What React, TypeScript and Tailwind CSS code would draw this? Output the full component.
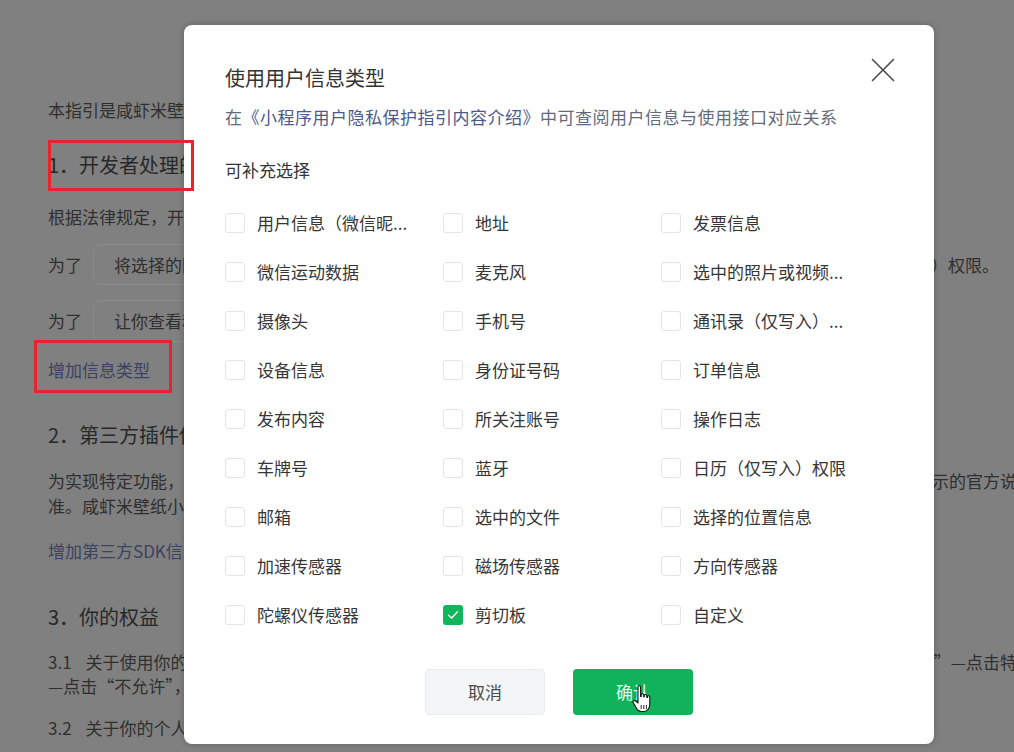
import React from "react";

const items: { label: string; checked?: boolean }[] = [
  { label: "用户信息（微信昵..." },
  { label: "地址" },
  { label: "发票信息" },
  { label: "微信运动数据" },
  { label: "麦克风" },
  { label: "选中的照片或视频..." },
  { label: "摄像头" },
  { label: "手机号" },
  { label: "通讯录（仅写入）..." },
  { label: "设备信息" },
  { label: "身份证号码" },
  { label: "订单信息" },
  { label: "发布内容" },
  { label: "所关注账号" },
  { label: "操作日志" },
  { label: "车牌号" },
  { label: "蓝牙" },
  { label: "日历（仅写入）权限" },
  { label: "邮箱" },
  { label: "选中的文件" },
  { label: "选择的位置信息" },
  { label: "加速传感器" },
  { label: "磁场传感器" },
  { label: "方向传感器" },
  { label: "陀螺仪传感器" },
  { label: "剪切板", checked: true },
  { label: "自定义" },
];

function Checkbox({ checked }: { checked?: boolean }) {
  if (checked) {
    return (
      <span className="flex h-[20px] w-[20px] shrink-0 items-center justify-center rounded-[3px] bg-[#11b65c]">
        <svg width="12" height="10" viewBox="0 0 12 10" fill="none">
          <path d="M1.5 5.2 L4.6 8 L10.5 1.8" stroke="#ffffff" strokeWidth="1.4" strokeLinecap="round" strokeLinejoin="round" />
        </svg>
      </span>
    );
  }
  return <span className="h-[20px] w-[20px] shrink-0 rounded-[3px] border border-[#e4e4e4] bg-white" />;
}

function HandCursor() {
  return (
    <svg width="24" height="30" viewBox="0 0 24 30" className="absolute left-[57px] top-[15px]">
      <path
        d="M8 3c0-1.6 2.6-1.6 2.6 0v9.5h.6V10.8c0-1.5 2.5-1.5 2.5 0v2h.6v-1.2c0-1.5 2.5-1.5 2.5 0v1.8h.6v-.6c0-1.5 2.4-1.5 2.4 0V20c0 4-2.4 7.5-6 7.5h-2.6c-2.2 0-3.6-1.2-4.6-3L3.2 18.6c-.8-1.3.6-2.7 2-1.8L8 19V3z"
        fill="#ffffff"
        stroke="#111111"
        strokeWidth="1.1"
        strokeLinejoin="round"
      />
      <path d="M11.2 21v4M13.8 21v4M16.4 21v4" stroke="#111111" strokeWidth="0.9" />
    </svg>
  );
}

export default function App() {
  return (
    <div className="relative h-[752px] w-[1014px] overflow-hidden bg-[#808080] font-['Noto_Sans_CJK_SC','Noto_Sans',sans-serif] text-[#2f2f2f]">
      {/* background page (dimmed) */}
      <div className="flex flex-col pl-[48px]">
        <div className="ml-[352px] mt-[24px] whitespace-nowrap text-[21px] leading-[22px] text-[#2a2a2a]">
          咸虾米壁纸小程序用户隐私保护指引
        </div>
        <div className="mt-[53px] whitespace-nowrap text-[17px] leading-[22px]">
          本指引是咸虾米壁纸小程序开发者为处理你的个人信息而制定。
        </div>
        <div className="mt-[31px] whitespace-nowrap text-[20px] leading-[26px] text-[#282828]">1．开发者处理的信息</div>
        <div className="mt-[28px] whitespace-nowrap text-[17px] leading-[22px]">
          根据法律规定，开发者仅处理实现小程序功能所必要的信息。
        </div>
        <div className="mt-[16px] flex h-[41px] items-center pr-[15px] text-[17px]">
          <span className="w-[45px] shrink-0">为了</span>
          <div className="flex h-[41px] flex-1 items-center rounded-[8px] border border-[#8b8b8b] pl-[20px] whitespace-nowrap">
            将选择的图片保存到相册
          </div>
          <span className="ml-[20px] shrink-0 whitespace-nowrap">开发者将在获取你的明示同意后，使用你的（相册（仅写入））权限。</span>
        </div>
        <div className="mt-[15px] flex h-[42px] items-center text-[17px]">
          <span className="w-[45px] shrink-0">为了</span>
          <div className="flex h-[42px] w-[700px] items-center rounded-[8px] border border-[#8b8b8b] pl-[20px] whitespace-nowrap">
            让你查看和选择需要分享的内容
          </div>
        </div>
        <div className="mt-[17px] whitespace-nowrap text-[17px] leading-[22px] text-[#3b4262]">增加信息类型</div>
        <div className="mt-[41px] whitespace-nowrap text-[20px] leading-[26px] text-[#282828]">2．第三方插件信息</div>
        <div className="mt-[20px] flex flex-col text-[17px] leading-[25px]">
          <span className="whitespace-nowrap">
            为实现特定功能，开发者可能会接入由第三方提供的插件。第三方插件可能会处理你的个人信息，请以第三方插件所提示的官方说明为
          </span>
          <span className="whitespace-nowrap">准。咸虾米壁纸小程序不会超出约定范围处理你的个人信息。</span>
        </div>
        <div className="mt-[22px] whitespace-nowrap text-[17px] leading-[22px] text-[#3b4262]">增加第三方SDK信息</div>
        <div className="mt-[42px] whitespace-nowrap text-[20px] leading-[26px] text-[#282828]">3．你的权益</div>
        <div className="mt-[20px] flex flex-col text-[17px] leading-[24px]">
          <span className="whitespace-nowrap">
            3.1<span className="inline-block w-[14px]" />关于使用你的用户信息，你可以撤回授权。如需撤回，你可以通过以下路径：在小程序主页右上角“…”—“设置”—点击特定信息
          </span>
          <span className="whitespace-nowrap">—点击“不允许”，撤回对此前处理你的个人信息的同意。</span>
        </div>
        <div className="mt-[19px] whitespace-nowrap text-[17px] leading-[22px]">
          3.2<span className="inline-block w-[14px]" />关于你的个人信息，你可以通过以下方式与开发者联系，行使查阅、复制、更正、删除等法定权利。
        </div>
      </div>

      {/* modal */}
      <div className="absolute left-[184px] top-[25px] z-10 flex w-[750px] flex-col rounded-[8px] bg-white pl-[41px] pt-[39px] pb-[29px] shadow-[0_0_6px_rgba(0,0,0,0.25)]">
        <button className="absolute right-[39px] top-[33px] h-[24px] w-[24px]">
          <svg width="24" height="24" viewBox="0 0 24 24" fill="none">
            <path d="M1.5 1.5 L22.5 22.5 M22.5 1.5 L1.5 22.5" stroke="#4a4a4a" strokeWidth="1.6" strokeLinecap="round" />
          </svg>
        </button>
        <div className="text-[20px] leading-[28px] text-[#333333]">使用用户信息类型</div>
        <div className="mt-[13px] whitespace-nowrap text-[17px] leading-[24px] tracking-[0.5px] text-[#626a7c]">
          在<span className="text-[#4b5a8c]">《小程序用户隐私保护指引内容介绍》</span>中可查阅用户信息与使用接口对应关系
        </div>
        <div className="mt-[29px] text-[17px] leading-[24px] text-[#353535]">可补充选择</div>
        <div className="mt-[16px] grid grid-cols-[218px_218px_218px]">
          {items.map((it) => (
            <div key={it.label} className="flex h-[49px] items-center gap-[12px]">
              <Checkbox checked={it.checked} />
              <span className="whitespace-nowrap text-[17px] text-[#363636]">{it.label}</span>
            </div>
          ))}
        </div>
        <div className="mt-[30px] flex justify-center gap-[28px] pr-[41px]">
          <button className="flex h-[46px] w-[120px] items-center justify-center rounded-[4px] border border-[#ececec] bg-[#f4f5f6] text-[17px] text-[#4a4a4a]">
            取消
          </button>
          <button className="relative flex h-[46px] w-[120px] items-center justify-center rounded-[4px] bg-[#10b35a] text-[17px] text-[#e8f7ee]">
            确认
            <HandCursor />
          </button>
        </div>
      </div>

      {/* red annotation boxes */}
      <div className="pointer-events-none absolute left-[48px] top-[140px] z-20 h-[51px] w-[146px] border-[3px] border-[#e8232b]" />
      <div className="pointer-events-none absolute left-[34px] top-[340px] z-20 h-[53px] w-[138px] border-[3px] border-[#e8232b]" />
    </div>
  );
}
